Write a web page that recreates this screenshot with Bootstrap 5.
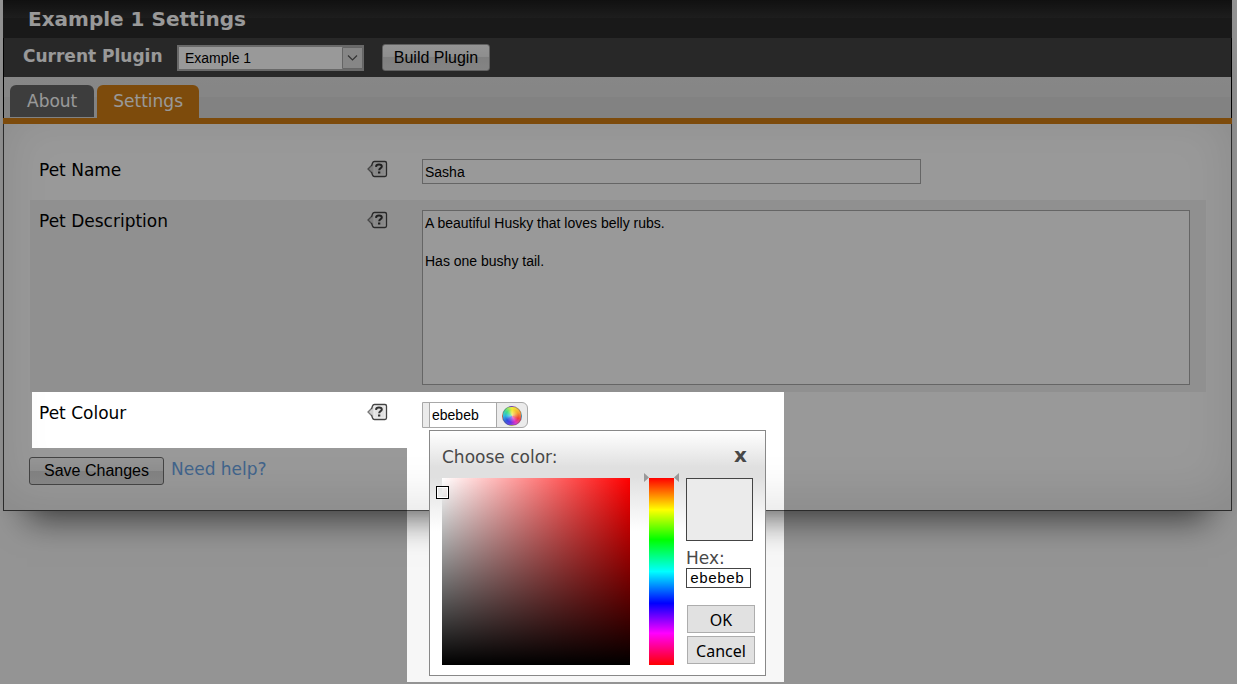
<!DOCTYPE html>
<html lang="en">
<head>
<meta charset="utf-8">
<meta name="viewport" content="width=device-width, initial-scale=1">
<title>Example 1 Settings</title>
<link href="https://cdn.jsdelivr.net/npm/bootstrap@5.3.0/dist/css/bootstrap.min.css" rel="stylesheet">
<style>
  body { background: #f7f7f7; color: #000; font-family: "DejaVu Sans", sans-serif; font-size: 17px; line-height: 24px; min-height: 100vh; overflow-x: hidden; }
  button, input, select, textarea { font-family: "Liberation Sans", sans-serif; color: #000; }
  .shell { margin: 0 5px 0 3px; box-shadow: 0 32px 32px -24px rgba(0,0,0,.6), 0 0 12px rgba(0,0,0,.05); }
  .title-bar { height: 38px; padding: 0 25px; background: linear-gradient(#1c1c1c 0, #323232 18px, #2a2a2a 18px, #2a2a2a 100%); color: #fff; }
  .title-bar h1 { font-size: 20px; line-height: 38px; font-weight: 700; }
  .plugin-bar { height: 39px; padding-left: 19px; background: #444; border: solid #000; border-width: 0 1px; }
  .plugin-bar label { color: #fff; font-weight: 700; width: 154px; line-height: 36px; }
  .plugin-select { width: 187px; height: 26px; }
  .plugin-select select { display: block; appearance: none; width: 100%; height: 26px; border: 2px solid #b0b0b0; border-radius: 0; background: #fff; font-size: 14px; line-height: 20px; padding: 1px 6px; }
  .plugin-select svg { right: 1px; top: 2px; pointer-events: none; }
  .glossy { font-size: 16px; line-height: 20px; border: 1px solid #707070; border-radius: 3px; background: linear-gradient(#f8f8f8, #ececec 50%, #d6d6d6 50%, #dcdcdc); }
  .build { width: 108px; height: 27px; padding: 2px 0; margin-left: 18px; border-color: #a0a0a0; }
  .save { width: 135px; height: 28px; padding: 3px 0; }
  .tab-strip { height: 41px; padding: 8px 0 0 6px; gap: 3px; background: linear-gradient(#e1e1e1 0, #dfdfdf 20px, #d9d9d9 20px); border: solid #000; border-width: 0 1px; }
  .tab-strip .nav-link { padding: 4px 17px; height: 32px; line-height: 24px; border-radius: 6px 6px 0 0; color: #fff; background: #676767; font-size: 17px; }
  .tab-strip .nav-link.active { background: #d07d14; height: 33px; padding: 4px 16px; }
  .orange-rule { height: 6px; background: #d07d14; }
  .panel-body { padding: 25px 25px 25px 26px; background: #fff; border: 1px solid #484848; border-top: 0; box-shadow: inset 0 -12px 48px rgba(0,0,0,.1); }
  .field-row { min-height: 51px; }
  .field-name { padding: 9px 34px 0 9px; }
  .field-value { padding: 10px 16px 7px 0; }
  .shade { background: #f0f0f0; }
  .help { width: 21px; height: 18px; margin-top: 2px; }
  .field-input { display: block; border: 1px solid #a8a8a8; background: #fff; font-size: 14px; line-height: 19px; border-radius: 0; }
  .name-input { width: 65%; height: 25px; padding: 0 2px; }
  .desc-input { width: 100%; height: 175px; padding: 3px 2px; resize: none; }
  .colour-field { width: 106px; height: 26px; border: 1px solid #a8a8a8; border-radius: 0 6px 6px 0; background: #ebebeb; padding-left: 6px; }
  .colour-field input { width: 68px; border: solid #a8a8a8; border-width: 0 1px; padding: 0 2px; font-size: 14px; background: #fff; }
  .colour-field button { border: 0; background: none; padding: 2px 0 0 5px; line-height: 0; }
  .wheel { display: block; width: 20px; height: 20px; border-radius: 50%; border: 1px solid rgba(70,70,90,.4); background: radial-gradient(rgba(255,255,255,.5), rgba(255,255,255,0) 50%, rgba(255,255,255,.25)), conic-gradient(#f2ee30, #f5a52a 60deg, #f03d36 110deg, #e02ec0 150deg, #5a34e8 195deg, #2a4ddc 230deg, #24b7e0 270deg, #3ede86 310deg, #f2ee30); }
  .picker { position: absolute; top: 28px; left: 7px; z-index: 5; width: 337px; height: 246px; border: 1px solid #888; background: linear-gradient(#fff, #e0e0e0 36px, #e0e0e0 46px, #fff 100px); padding: 12px 10px 12px 12px; color: #484848; }
  .picker-head { height: 35px; line-height: 28px; padding-right: 8px; }
  .picker-head button { border: 0; background: none; padding: 0; font-family: "DejaVu Sans", sans-serif; font-weight: 700; font-size: 20px; line-height: 24px; height: 24px; color: #484848; }
  .spectrum { width: 188px; height: 187px; background: linear-gradient(transparent, #000), linear-gradient(90deg, #fff, #f00); }
  .spectrum-mark { position: absolute; left: -6px; top: 8px; width: 13px; height: 13px; border: 1px solid #000; box-shadow: inset 0 0 0 1px #fff; }
  .hue { width: 25px; height: 187px; margin-left: 19px; background: linear-gradient(#f00, #ff0 17%, #0f0 33%, #0ff 50%, #00f 67%, #f0f 83%, #f00); }
  .hue svg { position: absolute; left: -5px; top: -5px; }
  .picker-side { width: 69px; margin-left: 12px; }
  .swatch { width: 67px; height: 63px; border: 1px solid #444; background: #ebebeb; }
  .picker-side label { display: block; line-height: 20px; margin-top: 7px; }
  .hex-input { display: block; width: 65px; height: 20px; border: 1px solid #444; padding: 2px 3px 0; margin-bottom: 17px; font-family: "Liberation Mono", monospace; font-size: 15px; line-height: 16px; }
  .flat { display: block; width: 68px; height: 28px; border: 1px solid #adadad; background: #e1e1e1; padding: 2px 0 0; font-family: "Noto Sans", sans-serif; font-size: 16px; line-height: 24px; margin: 0 0 3px 1px; }
  .actions { margin-top: 14px; gap: 7px; margin-left: -1px; }
  .actions a { color: #6ca5e6; }
  .dimmer { position: fixed; inset: 0; z-index: 4; pointer-events: none; background: rgba(0,0,0,.4);
    clip-path: polygon(evenodd, 0 0, 100% 0, 100% 100%, 0 100%, 0 0, 32px 392px, 784px 392px, 784px 682px, 407px 682px, 407px 448px, 32px 448px, 32px 392px, 0 0); }
</style>
</head>
<body>
<svg class="d-none" xmlns="http://www.w3.org/2000/svg">
  <defs>
    <symbol id="tag" viewBox="0 0 21 18">
      <path d="M1 9 4.500 5.500 5.500 3.500Q6 1.500 7.500 1.500H18Q19.500 1.500 19.500 3V14.500Q19.500 16.500 18 16.500H7.500Q6 16.500 5.500 14L4.500 12.500Z" fill="#cfcfcf"/>
      <path d="M4.500 5.500 1 9 4.500 12.500" fill="none" stroke="#777" stroke-width="1.300"/>
      <path d="M4.500 6 5.500 3Q6 1.500 7.500 1.500H18Q19.500 1.500 19.500 3V15Q19.500 16.500 18 16.500H7.500Q6 16.500 5.500 15L4.500 12" fill="none" stroke="#444" stroke-width="1.300"/>
      <path d="M7 3H18V15H7Z" fill="#e2e2e2" stroke="#f6f6f6" stroke-width=".8"/>
      <path d="M9 6.800Q9.200 4.500 12 4.500Q14.800 4.500 14.800 6.400Q14.800 7.500 13.300 8.300Q12.200 9 12.200 10.300" fill="none" stroke="#333" stroke-width="2"/>
      <path d="M11 11.500h2.300v2H11z" fill="#333"/>
    </symbol>
  </defs>
</svg>
<main class="shell">
  <header class="title-bar"><h1 class="m-0">Example 1 Settings</h1></header>
  <form class="plugin-bar d-flex">
    <label for="plugin">Current Plugin</label>
    <div class="plugin-select position-relative align-self-center">
      <select id="plugin"><option>Example 1</option></select>
      <svg class="position-absolute" width="21" height="22"><path d="M.5.500h20v21H.5z" fill="#e0e0e0" stroke="#a8a8a8"/><path d="M6 8.500 10.500 13 15 8.500" fill="none" stroke="#555" stroke-width="1.200"/></svg>
    </div>
    <button type="button" class="glossy align-self-center build">Build Plugin</button>
  </form>
  <nav class="tab-strip nav">
    <a class="nav-link" href="#about">About</a>
    <a class="nav-link active" href="#settings" aria-current="page">Settings</a>
  </nav>
  <div class="orange-rule"></div>
  <form class="panel-body">
    <div class="row g-0 field-row">
      <div class="col-4 field-name d-flex justify-content-between">
        <label for="petName">Pet Name</label><svg class="help"><use href="#tag"/></svg>
      </div>
      <div class="col-8 field-value"><input id="petName" class="field-input name-input" type="text" value="Sasha"></div>
    </div>
    <div class="row g-0 field-row shade">
      <div class="col-4 field-name d-flex justify-content-between">
        <label for="petDesc">Pet Description</label><svg class="help"><use href="#tag"/></svg>
      </div>
      <div class="col-8 field-value"><textarea id="petDesc" class="field-input desc-input">A beautiful Husky that loves belly rubs.

Has one bushy tail.</textarea></div>
    </div>
    <div class="row g-0 field-row">
      <div class="col-4 field-name d-flex justify-content-between">
        <label for="petColour">Pet Colour</label><svg class="help"><use href="#tag"/></svg>
      </div>
      <div class="col-8 field-value">
        <div class="position-relative">
          <div class="colour-field d-flex">
            <input id="petColour" type="text" value="ebebeb">
            <button type="button" aria-label="Choose color"><span class="wheel"></span></button>
          </div>
          <div class="picker">
            <div class="picker-head d-flex justify-content-between">
              <span>Choose color:</span><button type="button">x</button>
            </div>
            <div class="d-flex">
              <div class="spectrum position-relative flex-shrink-0"><span class="spectrum-mark"></span></div>
              <div class="hue position-relative flex-shrink-0"><svg width="35" height="9"><path d="M0 0v9l5-4.500zM35 0v9l-5-4.500z" fill="#999"/></svg></div>
              <div class="picker-side flex-shrink-0">
                <div class="swatch"></div>
                <label for="hex">Hex:</label>
                <input id="hex" class="hex-input" type="text" value="ebebeb">
                <button type="button" class="flat">OK</button>
                <button type="button" class="flat">Cancel</button>
              </div>
            </div>
          </div>
        </div>
      </div>
    </div>
    <div class="actions d-flex">
      <button type="button" class="glossy save">Save Changes</button>
      <a class="text-decoration-none" href="#help">Need help?</a>
    </div>
  </form>
</main>
<div class="dimmer"></div>
<script src="https://cdn.jsdelivr.net/npm/bootstrap@5.3.0/dist/js/bootstrap.bundle.min.js"></script>
</body>
</html>
